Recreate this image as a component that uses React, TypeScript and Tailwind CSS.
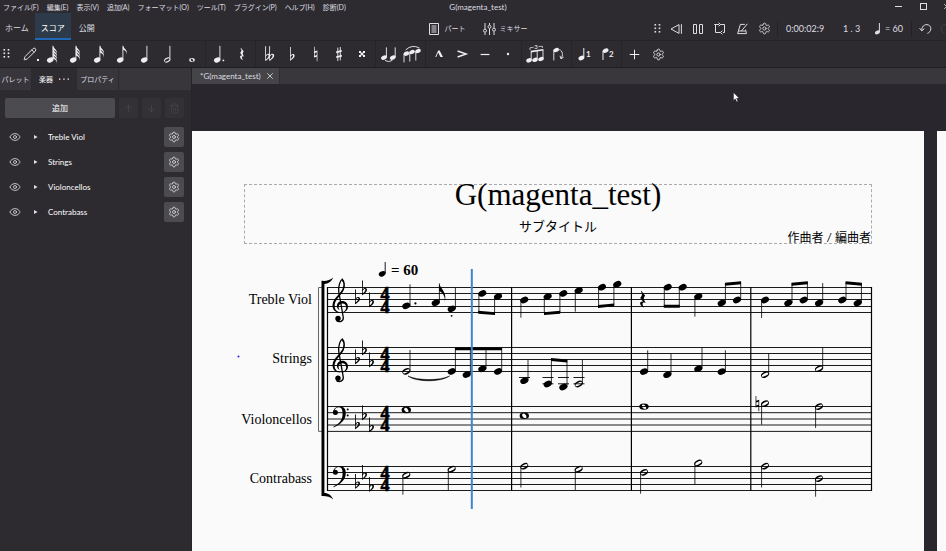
import { useState, type ReactNode } from "react";
import { Eye, Pencil, Plus, Settings, X, ArrowUp, ArrowDown, Trash2 } from "lucide-react";

const menuItems = [
  "ファイル(F)",
  "編集(E)",
  "表示(V)",
  "追加(A)",
  "フォーマット(O)",
  "ツール(T)",
  "プラグイン(P)",
  "ヘルプ(H)",
  "診断(D)",
];

const instruments = ["Treble Viol", "Strings", "Violoncellos", "Contrabass"];

/* ---------- shared music symbols ---------- */

const FLAT =
  "M0 -10.6H.9L.8 -1.6C2.6 -3.8 5.2 -3.2 5 -1C4.8 1 2.6 2.4 .3 4.2L0 4ZM.8 -.4L.7 2.6C2.4 1.2 3.5 -.2 3.4 -1.4C3.2 -2.6 1.8 -2.2 .8 -.4Z";
const NATURAL =
  "M0 -8.5H.8V-3.2L4 -4.2V8.5H3.2V3.2L0 4.2ZM.8 -1.2V2L3.2 1.2V-2Z";
const REST =
  "M-1.6 -8.6L2.4 -3.6C.5 -1.4 .4 0 3 3.4C0 2.2 -1.4 4 1 7.8L.7 8.2C-3.8 5.6 -3.6 1.8 .2 2.2L-2.6 -1.5C-.4 -3.6 -.3 -5.6 -2 -8.1Z";

type HeadProps = { x: number; y: number; kind?: "full" | "half" | "whole"; scale?: number };

function Head({ x, y, kind = "full", scale = 1 }: HeadProps) {
  return (
    <g transform={`translate(${x} ${y}) scale(${scale})`} fill="currentColor">
      {kind === "full" && <ellipse rx="4.2" ry="3" transform="rotate(-24)" />}
      {kind === "half" && (
        <g transform="rotate(-28)">
          <path fillRule="evenodd" d="M-4.2 0A4.2 2.9 0 1 0 4.2 0A4.2 2.9 0 1 0 -4.2 0ZM-3.6 0A3.6 1.3 0 1 0 3.6 0A3.6 1.3 0 1 0 -3.6 0Z" />
        </g>
      )}
      {kind === "whole" && (
        <path
          fillRule="evenodd"
          d="M-4.7 0A4.7 3.2 0 1 0 4.7 0A4.7 3.2 0 1 0 -4.7 0ZM-1.7 -1.8C-.4 -3.2 2.4 -.6 2.2 1.3C1.8 3.6 -1.6 1.8 -2.2 -.4Q-2.3 -1.2 -1.7 -1.8Z"
        />
      )}
    </g>
  );
}

/* ---------- toolbar icons ---------- */

function Glyph({ children, width = 20 }: { children: ReactNode; width?: number }) {
  return (
    <svg width={width} height="22" viewBox={`${-width / 2} -11 ${width} 22`} fill="currentColor" aria-hidden="true">
      {children}
    </svg>
  );
}

function NoteIcon({ flags = 0, kind = "full", dot = false }: { flags?: number; kind?: "full" | "half"; dot?: boolean }) {
  return (
    <Glyph>
      <Head x={-1.8} y={6} kind={kind} scale={0.8} />
      <path d="M.9 -8.2V5.4" stroke="currentColor" strokeWidth="0.9" />
      {Array.from({ length: flags }).map((_, i) => (
        <path
          key={i}
          transform={`translate(1 ${-8.4 + i * 3})`}
          d="M0 0C.6 3.4 4.6 3.6 4 9C3.8 6 2 5 0 4Z"
        />
      ))}
      {dot && <circle cx="4.4" cy="6.4" r="0.9" />}
    </Glyph>
  );
}

const line = { fill: "none", stroke: "currentColor", strokeWidth: 1 };

const noteGroups: { label: string; icon: ReactNode }[][] = [
  [
    {
      label: "Note input",
      icon: (
        <span className="flex items-end">
          <Pencil size={14} strokeWidth={1.6} />
          <span className="-mr-1 h-0.5 w-0.5 bg-current" />
        </span>
      ),
    },
    { label: "64th", icon: <NoteIcon flags={4} /> },
    { label: "32nd", icon: <NoteIcon flags={3} /> },
    { label: "16th", icon: <NoteIcon flags={2} /> },
    { label: "8th", icon: <NoteIcon flags={1} /> },
    { label: "Quarter", icon: <NoteIcon /> },
    { label: "Half", icon: <NoteIcon kind="half" /> },
    { label: "Whole", icon: <Glyph><Head x={0} y={6} kind="whole" scale={0.6} /></Glyph> },
  ],
  [
    { label: "Dotted", icon: <NoteIcon dot /> },
    { label: "Rest", icon: <Glyph><path d={REST} transform="scale(.72)" /></Glyph> },
  ],
  [
    {
      label: "Double flat",
      icon: (
        <Glyph>
          <path d={FLAT} transform="translate(-3.8 2.8)" />
          <path d={FLAT} transform="translate(.2 2.8)" />
        </Glyph>
      ),
    },
    { label: "Flat", icon: <Glyph><path d={FLAT} transform="translate(-2 2.8) scale(.92)" /></Glyph> },
    { label: "Natural", icon: <Glyph><path d={NATURAL} fillRule="evenodd" transform="translate(-2 0) scale(.85)" /></Glyph> },
    {
      label: "Sharp",
      icon: (
        <Glyph>
          <path d="M-1.2 -6.4V7M1.3 -7V6.4" {...line} strokeWidth="0.9" />
          <path d="M-2.8 -1.6L2.8 -3.2M-2.8 3.2L2.8 1.6" {...line} strokeWidth="1.7" />
        </Glyph>
      ),
    },
    {
      label: "Double sharp",
      icon: (
        <Glyph>
          <path d="M-2 -2L2 2M2 -2L-2 2" {...line} strokeWidth="1.2" />
          <path d="M-3 -3H-1V-1H-3ZM1 -3H3V-1H1ZM-3 1H-1V3H-3ZM1 1H3V3H1Z" />
        </Glyph>
      ),
    },
  ],
  [
    {
      label: "Tie",
      icon: (
        <Glyph>
          <Head x={-5} y={3.6} scale={0.72} />
          <Head x={3.8} y={3.6} scale={0.72} />
          <path d="M-2.6 -6.6V3M6.2 -6.6V3" {...line} strokeWidth="0.9" />
          <path d="M-4 6.4Q-.4 8.8 3.4 6.4" {...line} strokeWidth="0.9" />
        </Glyph>
      ),
    },
    {
      label: "Slur",
      icon: (
        <Glyph>
          <Head x={-5.6} y={-0.4} scale={0.68} />
          <Head x={0} y={-2} scale={0.68} />
          <Head x={6} y={-3} scale={0.68} />
          <path d="M-8 0V8.4M-2.2 -1.4V7.6M3.8 -2.4V6.6" {...line} strokeWidth="0.9" />
          <path d="M-6.4 -4Q0 -10 7.4 -6" {...line} strokeWidth="0.9" />
        </Glyph>
      ),
    },
  ],
  [
    { label: "Marcato", icon: <Glyph><path d="M-3.8 3L-.8 -3.4H.6L4 3H1.4L-.8 -1.4L-2.8 3Z" /></Glyph> },
    { label: "Accent", icon: <Glyph><path d="M-4.4 -3L4.2 0L-4.4 3" {...line} strokeWidth="1.4" /></Glyph> },
    { label: "Tenuto", icon: <Glyph><path d="M-4.4 .5H4.4" {...line} strokeWidth="1.2" /></Glyph> },
    { label: "Staccato", icon: <Glyph><circle r="1.2" /></Glyph> },
  ],
  [
    {
      label: "Tuplet",
      icon: (
        <Glyph>
          <Head x={-6} y={6.4} scale={0.68} />
          <Head x={0} y={5.8} scale={0.68} />
          <Head x={6} y={5} scale={0.68} />
          <path d="M-3.8 6V-2M2.2 5.4V-2.8M8 4.6V-3.8" {...line} strokeWidth="0.9" />
          <path d="M-4.2 -2.4L8.4 -4.2" {...line} strokeWidth="1.6" />
          <path d="M-5 -4V-6.2L-1.4 -6.8M3.4 -7.4L7.4 -7.8V-6" {...line} strokeWidth="0.7" />
          <text x="1" y="-5" fontSize="6" textAnchor="middle">3</text>
        </Glyph>
      ),
    },
    {
      label: "Flip",
      icon: (
        <Glyph>
          <Head x={-1.8} y={-4} scale={0.68} />
          <path d="M-4.2 -4V6.4" {...line} strokeWidth="0.9" />
          <path d="M1.2 -4.4C4.8 -3.4 5.4 1.6 3 4.4M3 4.8L2 1.8M3 4.8L5.6 3.2" {...line} strokeWidth="0.9" />
        </Glyph>
      ),
    },
  ],
  [
    {
      label: "Voice 1",
      icon: (
        <Glyph>
          <Head x={-3.6} y={4} scale={0.72} />
          <path d="M-1.2 -6V3.4" {...line} />
          <text x="1" y="3" fontSize="8" fontWeight="700">1</text>
        </Glyph>
      ),
    },
    {
      label: "Voice 2",
      icon: (
        <Glyph>
          <Head x={-2.4} y={-3.4} scale={0.72} />
          <path d="M-5 -3V6" {...line} />
          <text x="1" y="3" fontSize="8" fontWeight="700">2</text>
        </Glyph>
      ),
    },
  ],
  [
    { label: "Add", icon: <Plus size={15} strokeWidth={1.6} /> },
    { label: "Customize", icon: <Settings size={13} strokeWidth={1.6} /> },
  ],
];

const groupWidths = ["w-[187px]", "w-[47px]", "w-[117px]", "w-[47px]", "w-[93px]", "w-[47px]", "w-[47px]", "w-[47px]"];

function Grip() {
  return (
    <svg width="7" height="12" viewBox="0 0 7 12" fill="currentColor" aria-hidden="true">
      {[1, 4.5, 8].map((y) => (
        <g key={y}>
          <rect x="0.5" y={y} width="1.6" height="1.6" />
          <rect x="4.7" y={y} width="1.6" height="1.6" />
        </g>
      ))}
    </svg>
  );
}

const playback = [
  { label: "Rewind", icon: <Glyph width={16}><path d="M3 -4.4V4.4L-5 0ZM5.4 -4.8V4.8" {...line} /></Glyph> },
  { label: "Pause", icon: <Glyph width={16}><path d="M-4.5 -4.5H-1.5V4.5H-4.5ZM1.5 -4.5H4.5V4.5H1.5Z" {...line} /></Glyph> },
  {
    label: "Loop",
    icon: (
      <Glyph width={16}>
        <path d="M-2 -4.5H-4.5V3.5H.5M.5 -4.5H4.5V3.5H3M-5.8 -4.5H-1M-1.4 -6.3L.6 -4.5L-1.4 -2.7M2.4 1.7L.4 3.5L2.4 5.3" {...line} />
      </Glyph>
    ),
  },
  {
    label: "Metronome",
    icon: (
      <Glyph width={16}>
        <path d="M2.8 -4.6H-1.6L-4.4 4.6H4.4L3.6 .6M-3.4 2H3.6M-.6 2L5.4 -5.2" {...line} />
      </Glyph>
    ),
  },
  { label: "Playback settings", icon: <Settings size={13} strokeWidth={1.6} /> },
];

/* ---------- score ---------- */

const staves = [
  [287.5, 293.5, 299.5, 306.5, 312.5],
  [347.5, 353.5, 359.5, 365.5, 371.5],
  [406.5, 412.7, 419, 425, 431.4],
  [466.5, 472.5, 478.5, 484.5, 490.5],
];

// [x, y, stem end, kind] - the stem goes up when its end lies above the head
type Note = [number, number, number, ("full" | "half" | "whole")?];

const notes: Note[] = [
  // Treble Viol
  [406.3, 305.8, 284.3],
  [435.7, 302.8, 283.5],
  [451.7, 308.8, 287.5],
  [482.3, 293.4, 312],
  [498, 296.4, 313],
  [524.3, 300, 317.7],
  [547.7, 296.4, 313],
  [563.3, 293.4, 312],
  [578.7, 290.4, 311.7],
  [602, 287.2, 306],
  [617.3, 284.2, 305],
  [667.7, 287.2, 306],
  [682.7, 287.2, 306],
  [698.3, 296.4, 316.7],
  [721.7, 303, 283],
  [737, 300, 282],
  [765, 300, 318],
  [788.3, 303, 283],
  [803.7, 300, 282],
  [819, 303, 283],
  [842.3, 300, 282],
  [857.7, 303, 283],
  // Strings
  [406.3, 371.4, 350, "half"],
  [451.7, 371.4, 348],
  [466.7, 374.6, 348],
  [482.3, 368.8, 348],
  [498, 371.4, 348],
  [524.3, 380.7, 359.3],
  [547.7, 384, 359],
  [563.3, 387, 360],
  [578.7, 384, 359.5, "half"],
  [644, 371.6, 350.3],
  [667.3, 374.7, 353.3],
  [698.3, 368.7, 347.5],
  [721.7, 371.6, 350.3],
  [765, 374.7, 353.3, "half"],
  [819, 368.7, 347.5, "half"],
  // Violoncellos
  [406.3, 410, 0, "whole"],
  [524.3, 415.8, 0, "whole"],
  [644, 406.6, 0, "whole"],
  [765, 403.6, 424.7, "half"],
  [819, 406.6, 428, "half"],
  // Contrabass
  [406.3, 475.2, 494.7, "half"],
  [451.7, 469.2, 490, "half"],
  [524.3, 466.2, 487.5, "half"],
  [578.7, 469.2, 490, "half"],
  [644, 472.4, 493.7, "half"],
  [698.3, 463, 484.7, "half"],
  [765, 466.2, 487.5, "half"],
  [819, 478.6, 496.7, "half"],
];

// [x1, y1, x2, y2] along the top edge
const beams = [
  [478.2, 310.8, 495, 312.2],
  [544, 312.2, 560.2, 310.8],
  [598, 305, 614.2, 303.4],
  [663.8, 304.8, 679.8, 304.8],
  [725, 282.8, 741, 281.3],
  [791.6, 282.8, 807.8, 281.3],
  [845.6, 281.3, 861.8, 282.8],
  [455, 347.4, 502, 347.4],
  [551, 358, 567.2, 359.6],
];

const ledgers = [
  [519, 377.5],
  [542.5, 377.5],
  [558, 377.5],
  [573.5, 377.5],
  [542.5, 383.8],
  [558, 383.8],
  [573.5, 383.8],
];

const keySignatures = [
  [300, 291, 303],
  [360, 351, 363],
  [425, 416, 428],
  [484.6, 475.6, 487.6],
];

function TrebleClef({ y }: { y: number }) {
  return (
    <g transform={`translate(340.8 ${y})`}>
      <path
        d="M-4.5 14.6C-1.5 16.8 2.8 15.4 2.5 11.5L-2 -14C-2.8 -20 -.5 -25.5 1.5 -26.8C3.6 -24.6 4 -20 2.4 -17"
        fill="none"
        stroke="currentColor"
        strokeWidth="1.3"
      />
      <path d="M1.2 -27.4C3.8 -25 4.6 -19 2.8 -15.4C.4 -10.4 -6.2 -6.4 -6.2 0C-6.2 3.6 -3.8 6 .2 6.6C-4.6 7.2 -8.4 4.2 -8.3 -.8C-8 -8.6 2 -13 2.9 -20.4C3.1 -22.6 2.6 -23.8 1.6 -24.2Z" />
      <path d="M-1.2 4C-5.4 2.6 -4.8 -5 1.4 -5C5 -5 7.2 -2.4 7.2 .8C7.2 4.2 4.4 6.9 0 6.9C3.6 6 5.4 4 5.4 1.2C5.4 -1 3.8 -2.6 1.5 -2.5C-1.6 -2.4 -3.4 .8 -1.2 4Z" />
      <circle cx="-2.8" cy="12.4" r="2.7" />
    </g>
  );
}

function BassClef({ y }: { y: number }) {
  return (
    <g transform={`translate(335.4 ${y})`}>
      <path d="M-2.2 .2C-2.4 -4 1.2 -6 4.5 -6C8.4 -6 10.4 -3.4 10.4 .8C10.4 7.6 5 12.2 -1.8 15L-2 14.3C4 11.2 7.2 7.5 7.2 1C7.2 -3 6 -5.2 3.5 -5.2C1.2 -5.2 -.8 -3.6 -1 -1.6Z" />
      <circle cx="0" cy="0" r="2.5" />
      <circle cx="12.3" cy="-3" r="1" />
      <circle cx="12.3" cy="3" r="1" />
    </g>
  );
}

function Score() {
  return (
    <svg viewBox="244 244 628 268" className="block w-full overflow-visible text-black" fill="currentColor" role="img" aria-label="Score">
      <g className="font-['Liberation_Serif',serif]" fontSize="14" textAnchor="end">
        {instruments.map((name, i) => (
          <text key={name} x="312" y={[304, 363, 424, 483][i]}>
            {name}
          </text>
        ))}
      </g>

      <g stroke="currentColor" strokeWidth="0.9">
        {staves.flat().map((y) => (
          <path key={y} d={`M327 ${y}H872`} />
        ))}
        {ledgers.map(([x, y]) => (
          <path key={`${x}-${y}`} d={`M${x} ${y}h11`} />
        ))}
      </g>
      <g stroke="currentColor" strokeWidth="1.2">
        {[327.5, 511.6, 631.4, 750.8, 871.5].map((x) => (
          <path key={x} d={`M${x} 287V491`} />
        ))}
      </g>

      {/* brackets */}
      <path d="M322 287.5H318.5V431.4H322" fill="none" stroke="#555" strokeWidth="0.9" />
      <path d="M321.5 280.8C326 281.2 330 280.6 333.2 277.6C331.4 282 328 283.8 324.4 284V493C328 493 331.4 495 333.2 499.6C330 496.4 326 495.8 321.5 496Z" />

      <TrebleClef y={306} />
      <TrebleClef y={365.8} />
      <BassClef y={412.5} />
      <BassClef y={472.3} />

      {keySignatures.map((ys) =>
        ys.map((y, i) => <path key={y} d={FLAT} transform={`translate(${355 + i * 7} ${y})`} />)
      )}
      {staves.map((s) => (
        <text
          key={s[0]}
          className="font-['Liberation_Serif',serif]"
          fontSize="18"
          fontWeight="700"
          stroke="currentColor"
          strokeWidth="0.7"
          textAnchor="middle"
        >
          <tspan x="385" y={s[2]}>4</tspan>
          <tspan x="385" y={s[4]}>4</tspan>
        </text>
      ))}

      {/* tempo mark */}
      <Head x={382.2} y={273.8} scale={0.85} />
      <path d="M385.2 262V273.4" stroke="currentColor" strokeWidth="0.9" />
      <text x="391" y="275" fontSize="15" fontWeight="700" className="font-['Liberation_Serif',serif]">
        = 60
      </text>

      {notes.map(([x, y, end, kind]) => {
        const stemX = end < y ? x + 3.7 : x - 3.4;
        return (
          <g key={`${x}-${y}`}>
            <Head x={x} y={y} kind={kind} />
            {kind !== "whole" && <path d={`M${stemX} ${y}V${end}`} stroke="currentColor" strokeWidth="0.8" />}
          </g>
        );
      })}
      {beams.map(([x1, y1, x2, y2]) => (
        <path key={`${x1}-${y1}`} d={`M${x1} ${y1}L${x2} ${y2}v2.9L${x1} ${y1 + 2.9}Z`} />
      ))}

      <path d="M439.2 283.2C440 288.6 447.6 291.6 444.8 302.4C445.6 296 442.4 292.6 439.2 291Z" />
      <circle cx="415.4" cy="303.4" r="1.1" />
      <circle cx="451.6" cy="315.8" r="0.9" />
      <path d={REST} transform="translate(642.8 299.4)" />
      <path d={NATURAL} fillRule="evenodd" transform="translate(755.6 403.6) scale(.9)" />
      <path d="M408 376C416 382.4 441 382.4 449.6 376C440 380.8 418 380.8 408 376Z" stroke="currentColor" strokeWidth="0.5" />

      <rect x="470.8" y="269" width="2" height="240" fill="#3f86cc" />
      <circle cx="238.5" cy="356.6" r="1" fill="#2222ee" />
    </svg>
  );
}

/* ---------- page ---------- */

export default function App() {
  const [mode, setMode] = useState("スコア");
  const [panel, setPanel] = useState("楽器");

  return (
    <div className="flex h-screen flex-col overflow-hidden bg-[#2d2b30] font-[Lato,'Noto_Sans_CJK_JP',sans-serif] text-[8px] text-[#dedde0]">
      {/* title bar */}
      <header className="-mr-[10px] grid h-[13px] shrink-0 grid-cols-[1fr_auto_1fr] items-center">
        <nav className="flex gap-2 pl-[3px] text-[7px] leading-3">
          {menuItems.map((item) => (
            <button key={item} className="whitespace-nowrap">
              {item}
            </button>
          ))}
        </nav>
        <h1 className="leading-3">G(magenta_test)</h1>
        <div className="flex items-center justify-end">
          <button aria-label="Minimize" className="flex w-[25px] justify-center">
            <span className="h-px w-[7px] bg-current" />
          </button>
          <button aria-label="Maximize" className="flex w-[25px] justify-center">
            <span className="h-[7px] w-[7px] border border-current" />
          </button>
          <button aria-label="Close" className="flex w-5 justify-center">
            <X size={9} />
          </button>
        </div>
      </header>

      {/* mode tabs and playback */}
      <div className="-mr-[10px] grid h-7 shrink-0 grid-cols-[1fr_auto_1fr] items-center border-b border-[#252428]">
        <div className="flex h-full">
          {["ホーム", "スコア", "公開"].map((tab) => (
            <button
              key={tab}
              onClick={() => setMode(tab)}
              className={`h-full border-b-2 px-[5px] pt-1 first:pr-1.5 ${
                mode === tab ? "w-9 border-[#1f68b8] bg-[#2d3a49] text-white" : "border-transparent last:px-2"
              }`}
            >
              {tab}
            </button>
          ))}
        </div>

        <div className="flex items-center gap-[17px] pt-1 text-[7px]">
          <button className="flex items-center gap-1.5">
            <svg width="10" height="12" viewBox="0 0 10 12" {...line} aria-hidden="true">
              <path d="M.5 .5H9.5V11.5H.5ZM2.5 3H7.5M2.5 5H7.5M2.5 7H7.5M2.5 9H7.5" />
            </svg>
            パート
          </button>
          <button className="flex items-center gap-1">
            <svg width="13" height="12" viewBox="0 0 13 12" {...line} aria-hidden="true">
              <path d="M2 0V6M2 9.5V12M6.5 0V2M6.5 5.5V12M11 0V5M11 8.5V12" />
              <circle cx="2" cy="7.7" r="1.5" />
              <circle cx="6.5" cy="3.8" r="1.5" />
              <circle cx="11" cy="6.7" r="1.5" />
            </svg>
            ミキサー
          </button>
        </div>

        <div className="flex items-center justify-end pt-1 text-[9px]">
          <Grip />
          <div className="ml-1 flex">
            {playback.map((b) => (
              <button key={b.label} aria-label={b.label} className="flex w-[22px] items-center justify-center">
                {b.icon}
              </button>
            ))}
          </div>
          <span className="ml-0.5 h-4 w-px bg-[#232226]" />
          <time className="ml-2 w-[57px]">0:00:02:9</time>
          <span className="w-8">1 . 3</span>
          <span className="flex items-center gap-1">
            <svg width="6" height="12" viewBox="0 0 6 12" fill="currentColor" aria-hidden="true">
              <Head x={2.4} y={9.4} scale={0.6} />
              <path d="M4.4 0V9" stroke="currentColor" />
            </svg>
            = 60
          </span>
          <span className="mx-1 ml-2 h-4 w-px bg-[#232226]" />
          <button aria-label="Undo" className="flex w-5 justify-center">
            <Glyph width={16}>
              <path d="M-4.2 1.6C-4.6 -6 4.8 -6 4.8 -.4C4.8 2 3.4 3.6 1.4 4.4M-6.4 -.8L-4.2 1.8L-1.6 -.4" {...line} />
            </Glyph>
          </button>
          <button aria-label="Redo" disabled className="flex w-5 justify-center text-[#434247]">
            <Glyph width={16}>
              <path d="M4.2 1.6C4.6 -6 -4.8 -6 -4.8 -.4C-4.8 2 -3.4 3.6 -1.4 4.4M6.4 -.8L4.2 1.8L1.6 -.4" {...line} />
            </Glyph>
          </button>
        </div>
      </div>

      {/* note input toolbar */}
      <div className="flex h-[27px] shrink-0 items-center border-b border-[#1e1d20] pl-[3px] text-[#efeef0]">
        <Grip />
        <div className="ml-[7px] flex">
          {noteGroups.map((group, i) => (
            <div key={i} className="flex">
              {i > 0 && <span className="mx-px w-px bg-[#252428]" />}
              <div className={`flex ${groupWidths[i]}`}>
                {group.map((b) => (
                  <button key={b.label} aria-label={b.label} className="flex h-[26px] min-w-0 flex-1 items-center justify-center">
                    {b.icon}
                  </button>
                ))}
              </div>
            </div>
          ))}
        </div>
      </div>

      <div className="flex min-h-0 flex-1">
        {/* instruments panel */}
        <aside className="w-48 shrink-0 border-r border-[#252428]">
          <div className="flex h-[22px] bg-[#38363b] text-[7px]">
            {[
              { name: "パレット", width: "w-8" },
              { name: "楽器", width: "w-[45px]" },
              { name: "プロパティ", width: "w-[42px]" },
            ].map(({ name, width }) => (
              <button
                key={name}
                onClick={() => setPanel(name)}
                className={`flex items-center justify-center gap-1.5 whitespace-nowrap border-r border-[#2b2a2e] ${width} ${
                  panel === name ? "bg-[#2d2b30] text-white" : ""
                }`}
              >
                {name}
                {name === "楽器" && (
                  <svg width="10" height="2" viewBox="0 0 10 2" fill="currentColor" aria-hidden="true">
                    <path d="M0 .5H1.3V1.8H0ZM4.3 .5H5.6V1.8H4.3ZM8.6 .5H9.9V1.8H8.6Z" />
                  </svg>
                )}
              </button>
            ))}
          </div>

          <div className="flex gap-1 pt-2 pr-[7px] pl-[5px]">
            <button className="h-5 flex-1 rounded-xs bg-[#4c4b4f] text-white">追加</button>
            {[ArrowUp, ArrowDown, Trash2].map((Icon, i) => (
              <button
                key={i}
                disabled
                aria-label={["Move up", "Move down", "Delete"][i]}
                className="flex h-5 w-[19px] items-center justify-center rounded-xs bg-[#333136] text-[#48474b]"
              >
                <Icon size={11} strokeWidth={1.5} />
              </button>
            ))}
          </div>

          <ul className="flex flex-col gap-[5px] pt-[9px] pr-[7px] pl-[9px]">
            {instruments.map((name) => (
              <li key={name} className="flex h-5 items-center">
                <button aria-label={`Show ${name}`}>
                  <Eye size={12} strokeWidth={1.6} />
                </button>
                <button aria-label={`Expand ${name}`} className="ml-3 flex w-[15px] pl-px">
                  <svg width="4" height="6" viewBox="0 0 4 6" fill="currentColor">
                    <path d="M0 .9L3.6 3L0 5.1Z" />
                  </svg>
                </button>
                <span className="flex-1 text-white">{name}</span>
                <button
                  aria-label={`${name} settings`}
                  className="flex h-5 w-5 items-center justify-center rounded-xs bg-[#4c4b4f]"
                >
                  <Settings size={12} strokeWidth={1.6} />
                </button>
              </li>
            ))}
          </ul>
        </aside>

        {/* score view */}
        <main className="flex min-w-0 flex-1 flex-col">
          <div className="flex h-4 shrink-0 bg-[#39373c]">
            <div className="flex items-center gap-1 border-r border-[#302f33] bg-[#454448] pr-1 pl-2">
              <span>*G(magenta_test)</span>
              <button aria-label="Close tab">
                <X size={10} strokeWidth={2} />
              </button>
            </div>
          </div>

          <div className="relative flex flex-1 gap-[13px] overflow-hidden bg-[#29272d] pt-[47px]">
            <section className="min-w-0 flex-1 bg-[#fafafa] px-[52px] pt-[53px] text-black">
              <div className="flex h-[60px] flex-col border border-dashed border-[#aaa]">
                <h2 className="text-center font-['Liberation_Serif',serif] text-[31px] leading-5">G(magenta_test)</h2>
                <div className="grid flex-1 grid-cols-[1fr_auto_1fr]">
                  <span />
                  <p className="self-center pt-1 text-[13px] leading-4">サブタイトル</p>
                  <p className="self-end text-right text-[12px] leading-[10px]">作曲者 / 編曲者</p>
                </div>
              </div>
              <Score />
            </section>
            <section className="w-[9px] shrink-0 bg-[#fafafa]" />

            <svg className="absolute top-2 left-[541px]" width="7" height="11" viewBox="0 0 7 11" aria-hidden="true">
              <path d="M.5 .5V8.4L2.3 6.8L3.6 9.8L4.9 9.2L3.6 6.3H6.2Z" fill="#fff" stroke="#111" strokeWidth="0.4" />
            </svg>
          </div>
        </main>
      </div>
    </div>
  );
}
